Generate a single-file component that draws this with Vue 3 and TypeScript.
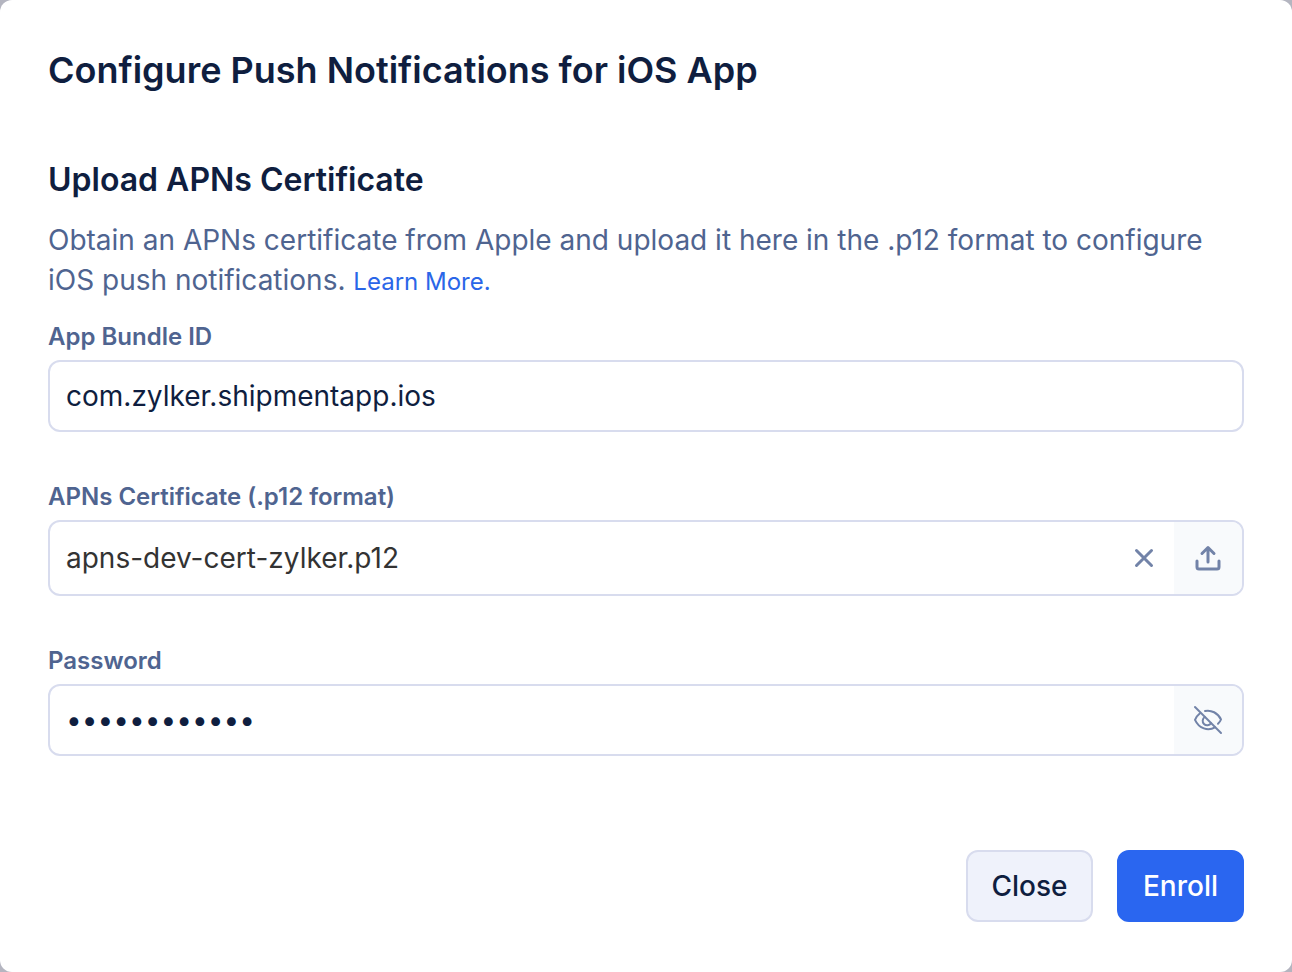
<script setup lang="ts">
import { ref } from 'vue'

const bundleId = ref('com.zylker.shipmentapp.ios')
const certificate = ref('apns-dev-cert-zylker.p12')
const password = ref('zylker-apns1')
const showPassword = ref(false)
</script>

<template>
  <div class="backdrop">
    <form class="dialog" role="dialog" aria-labelledby="dialog-title" @submit.prevent>
      <h1 id="dialog-title">Configure Push Notifications for iOS App</h1>
      <h2>Upload APNs Certificate</h2>
      <p class="intro">
        <span>Obtain an APNs certificate from Apple and upload it here in the .p12 format to configure iOS push notifications.</span>
        {{ ' ' }}<a href="#">Learn More.</a>
      </p>

      <div class="field">
        <label for="bundle">App Bundle ID</label>
        <div class="control">
          <input id="bundle" v-model="bundleId" type="text" />
        </div>
      </div>

      <div class="field">
        <label for="cert">APNs Certificate (.p12 format)</label>
        <div class="control tall">
          <input id="cert" class="file" type="text" readonly :value="certificate" />
          <button class="clear" type="button" aria-label="Remove certificate" @click="certificate = ''">
            <svg class="bold" width="20" height="20" viewBox="0 0 20 20"><path d="M2.500 2.500l15 15M17.500 2.500l-15 15" /></svg>
          </button>
          <button class="addon" type="button" aria-label="Upload certificate">
            <svg class="bold" width="28" height="28" viewBox="0 0 28 28"><path d="M14 18V3.500M8 9.500l6-6 6 6M3 17v6q0 2 2 2h18q2 0 2-2v-6" /></svg>
          </button>
        </div>
      </div>

      <div class="field">
        <label for="password">Password</label>
        <div class="control">
          <input id="password" v-model="password" :type="showPassword ? 'text' : 'password'" />
          <button class="addon" type="button" aria-label="Show password" @click="showPassword = !showPassword">
            <svg width="30" height="30" viewBox="0 0 30 30">
              <path d="M2 2l26 26" />
              <path d="M12 6C18 4.500 25 8 28 14.500Q27 17 25 18.800" />
              <path d="M7 8.200Q3.500 11 2 14.800C6 23.500 15 26.500 22 22.300" />
              <path d="M11.800 12A4.500 4.500 0 1 0 18 18.200" />
            </svg>
          </button>
        </div>
      </div>

      <footer>
        <button class="btn" type="button">Close</button>
        <button class="btn primary" type="submit">Enroll</button>
      </footer>
    </form>
  </div>
</template>

<style>
body {
  background: #b4b5c0;
}
</style>

<style scoped>
.backdrop {
  min-height: 100vh;
  display: flex;
  font-family: Inter, 'Liberation Sans', sans-serif;
}
.dialog {
  flex: 1;
  box-sizing: border-box;
  padding: 46px 48px 50px;
  background: #fff;
  border-radius: 12px;
  display: flex;
  flex-direction: column;
}
h1,
h2,
p {
  margin: 0;
}
h1 {
  font-size: 36px;
  line-height: 48px;
  font-weight: 600;
  color: #0f1e3f;
}
h2 {
  margin-top: 66px;
  font-size: 32px;
  line-height: 40px;
  font-weight: 600;
  color: #0f1e3f;
}
.intro {
  margin-top: 20px;
  font-size: 28px;
  line-height: 40px;
  color: #4f6490;
}
.intro a {
  font-size: 24px;
  line-height: 28px;
  color: #2a66e8;
  text-decoration: none;
}
.field {
  margin-bottom: 48px;
}
.intro + .field {
  margin-top: 20px;
}
label {
  display: block;
  margin-bottom: 6px;
  font-size: 24px;
  line-height: 34px;
  font-weight: 600;
  color: #4f6490;
}
.control {
  display: flex;
  box-sizing: border-box;
  height: 72px;
  border: 2px solid #d8dcee;
  border-radius: 12px;
  overflow: hidden;
}
.tall {
  height: 76px;
}
input {
  flex: 1;
  min-width: 0;
  padding: 0 16px;
  border: 0;
  outline: 0;
  background: transparent;
  font-family: inherit;
  font-size: 28px;
  color: #0f1e3f;
}
.file {
  color: #333;
}
button {
  font-family: inherit;
  cursor: pointer;
}
.clear,
.addon {
  display: flex;
  align-items: center;
  justify-content: center;
  padding: 0;
  border: 0;
}
.clear {
  width: 60px;
  background: transparent;
}
.addon {
  width: 68px;
  background: #f8fafc;
}
svg {
  fill: none;
  stroke: #7283a8;
  stroke-width: 2;
  stroke-linecap: round;
  stroke-linejoin: round;
}
.bold {
  stroke-width: 3;
}
footer {
  display: flex;
  justify-content: flex-end;
  gap: 24px;
  margin-top: auto;
}
.btn {
  height: 72px;
  min-width: 127px;
  padding: 0 20px;
  border: 2px solid #d8dcee;
  border-radius: 12px;
  background: #eff2fb;
  font-size: 28px;
  font-weight: 500;
  color: #0f1e3f;
}
.primary {
  border-color: #2a66f0;
  background: #2a66f0;
  color: #fff;
}
</style>
